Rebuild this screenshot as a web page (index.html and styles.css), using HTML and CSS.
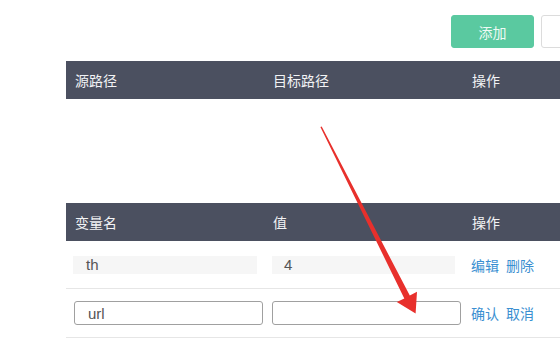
FILE: index.html
```html
<!DOCTYPE html>
<html lang="zh-CN">
<head>
<meta charset="utf-8">
<link rel="stylesheet" href="styles.css">
</head>
<body>
<div class="main">
  <div class="toolbar">
    <button class="btn btn-add">添加</button>
    <button class="btn btn-plain"></button>
  </div>
  <table class="grid">
    <colgroup><col class="c1"><col class="c2"><col class="c3"></colgroup>
    <thead>
      <tr><th>源路径</th><th>目标路径</th><th>操作</th></tr>
    </thead>
  </table>
  <div class="empty"></div>
  <table class="grid">
    <colgroup><col class="c1"><col class="c2"><col class="c3"></colgroup>
    <thead>
      <tr><th>变量名</th><th>值</th><th>操作</th></tr>
    </thead>
    <tbody>
      <tr class="row">
        <td><div class="ro">th</div></td>
        <td><div class="ro ro2">4</div></td>
        <td><a class="lnk">编辑</a><a class="lnk">删除</a></td>
      </tr>
      <tr class="row row-edit">
        <td><input class="inp" value="url"></td>
        <td><input class="inp inp2" value=""></td>
        <td><a class="lnk">确认</a><a class="lnk">取消</a></td>
      </tr>
    </tbody>
  </table>
</div>
<svg class="arrow" width="560" height="343" viewBox="0 0 560 343">
  <polygon points="320.4,127 321.7,126.5 409.8,295.6 417,291.8 415.6,313.6 396.8,302 404.3,298.4" fill="#e8302c"/>
</svg>
</body>
</html>
```
FILE: styles.css
```css
html, body {
  margin: 0;
  padding: 0;
  background: #ffffff;
  overflow: hidden;
  width: 560px;
  height: 343px;
}
body {
  position: relative;
  font-family: "Noto Sans CJK SC", "Noto Sans", sans-serif;
  font-size: 14px;
  color: #555;
}
.main {
  margin-left: 66px;
  width: 558px;
}
.toolbar {
  display: flex;
  justify-content: flex-end;
  gap: 7px;
  padding-top: 15px;
  margin-bottom: 13px;
}
.btn {
  width: 83px;
  height: 33px;
  border-radius: 3px;
  font-family: "Noto Sans CJK SC", sans-serif;
  font-size: 14px;
  padding: 0;
}
.btn-add {
  background: #5ac9a0;
  border: 1px solid #5ac9a0;
  color: #eefaf5;
}
.btn-plain {
  background: #fff;
  border: 1px solid #dcdcdc;
}
.grid {
  width: 558px;
  border-collapse: collapse;
  table-layout: fixed;
}
.c1 { width: 198px; }
.c2 { width: 199px; }
.c3 { width: 161px; }
.grid th {
  background: #4b5060;
  color: #f2f3f5;
  font-weight: normal;
  text-align: left;
  height: 38px;
  padding: 0 0 0 9px;
  font-size: 14px;
  line-height: 38px;
}
.empty {
  height: 104px;
}
.grid td {
  padding: 0 0 0 7px;
  border-bottom: 1px solid #e6e6e6;
  height: 47px;
  vertical-align: middle;
}
.row-edit td {
  height: 48px;
}
.ro {
  width: 171px;
  height: 18px;
  line-height: 18px;
  background: #f6f6f6;
  padding-left: 13px;
  font-family: "Liberation Sans", sans-serif;
  font-size: 15px;
  color: #555;
}
.ro2 {
  margin-left: 1px;
  padding-left: 12px;
}
.inp {
  box-sizing: border-box;
  width: 189px;
  height: 24px;
  border: 1px solid #a0a0a0;
  border-radius: 3px;
  padding: 0 0 0 13px;
  margin: 0 0 0 1px;
  font-family: "Liberation Sans", sans-serif;
  font-size: 15px;
  color: #555;
  display: block;
}
.inp2 {
  margin-left: 1px;
}
.grid td:nth-child(3) {
  padding-left: 8px;
}
.lnk {
  color: #3a8fd1;
  font-size: 14px;
  cursor: pointer;
}
.lnk + .lnk {
  margin-left: 7px;
}
.arrow {
  position: absolute;
  left: 0;
  top: 0;
  pointer-events: none;
}
```
